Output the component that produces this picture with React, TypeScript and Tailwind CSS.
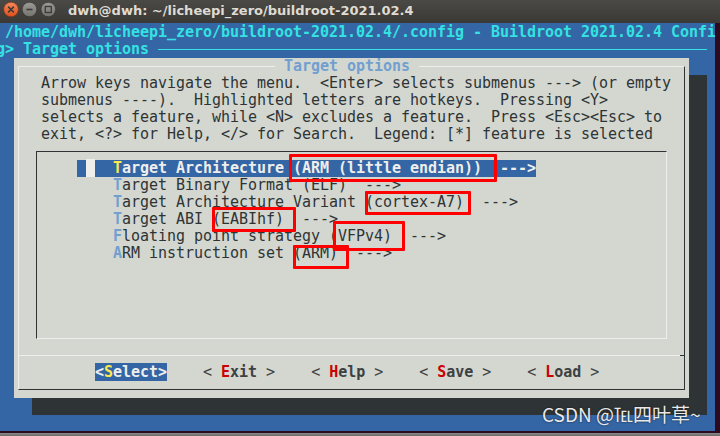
import React from "react";

const MONO = "font-['DejaVu_Sans_Mono',monospace] text-[15px] leading-[17px] tracking-[-0.03px]";

function TitleBar() {
  return (
    <div className="h-[23px] flex items-center bg-gradient-to-b from-[#4a4945] to-[#3a3935] shrink-0">
      <svg width="62" height="23" viewBox="0 0 62 23" className="shrink-0">
        <defs>
          <linearGradient id="cl" x1="0" y1="0" x2="0" y2="1">
            <stop offset="0" stopColor="#f58b5e" />
            <stop offset="1" stopColor="#df4e1c" />
          </linearGradient>
          <linearGradient id="gr" x1="0" y1="0" x2="0" y2="1">
            <stop offset="0" stopColor="#9c9b96" />
            <stop offset="1" stopColor="#73726d" />
          </linearGradient>
        </defs>
        <circle cx="11" cy="9.5" r="7.3" fill="url(#cl)" stroke="#7e3113" strokeWidth="0.6" />
        <path d="M8.6 7.1 L13.4 11.9 M13.4 7.1 L8.6 11.9" stroke="#3c3b37" strokeWidth="1.6" strokeLinecap="round" />
        <circle cx="29.5" cy="9.5" r="7.3" fill="url(#gr)" stroke="#2e2d2a" strokeWidth="0.6" />
        <path d="M26.5 9.5 L32.5 9.5" stroke="#3c3b37" strokeWidth="1.6" />
        <circle cx="48.3" cy="9.5" r="7.3" fill="url(#gr)" stroke="#2e2d2a" strokeWidth="0.6" />
        <rect x="45.3" y="6.5" width="6" height="6" fill="none" stroke="#3c3b37" strokeWidth="1.3" />
      </svg>
      <div className="ml-[6px] font-['DejaVu_Sans',sans-serif] font-bold text-[13px] text-[#dfdbd2] whitespace-pre leading-[20px] pb-[2px]">
        dwh@dwh: ~/licheepi_zero/buildroot-2021.02.4
      </div>
    </div>
  );
}

function Row({ children, className = "" }: { children?: React.ReactNode; className?: string }) {
  return <div className={"h-[17px] whitespace-pre " + className}>{children}</div>;
}

const items = [
  ["T", "arget Binary Format (ELF)  --->"],
  ["T", "arget Architecture Variant (cortex-A7)  --->"],
  ["T", "arget ABI (EABIhf)  --->"],
  ["F", "loating point strategy (VFPv4)  --->"],
  ["A", "RM instruction set (ARM)  --->"],
];

function Btn({ k, rest }: { k: string; rest: string }) {
  return (
    <span className="text-[#3d4143]">
      {"< "}
      <span className="font-bold text-[#cc0000]">{k}</span>
      <span className="font-bold">{rest}</span>
      {" >"}
    </span>
  );
}

function Dialog() {
  return (
    <div className="ml-[18px] w-[675px] h-[340px] bg-[#d3d7cf] relative shadow-[18px_17px_0_0_#2e3436] text-[#2e3436]">
      {/* frame */}
      <div className="absolute left-[4px] top-[8px] w-[667px] h-[324px] border border-t-[#eeeeec] border-l-[#eeeeec] border-r-[#2e3436] border-b-[#2e3436]" />
      {/* separator */}
      <div className="absolute left-[4px] top-[297px] w-[662px] h-[1px] bg-[#eeeeec]" />
      <div className="absolute left-[666px] top-[297px] w-[5px] h-[1px] bg-[#2e3436]" />
      {/* menu box */}
      <div className="absolute left-[22px] top-[93px] w-[631px] h-[188px] border border-t-[#2e3436] border-l-[#2e3436] border-r-[#eeeeec] border-b-[#eeeeec]" />
      {/* title */}
      <div className="absolute left-[261px] top-0 h-[17px] whitespace-pre bg-[#d3d7cf] font-bold text-[#729fcf]">
        {" Target options "}
      </div>
      <div className="relative flex flex-col">
        <Row />
        <Row className="pl-[27px]">Arrow keys navigate the menu.  &lt;Enter&gt; selects submenus ---&gt; (or empty</Row>
        <Row className="pl-[27px]">submenus ----).  Highlighted letters are hotkeys.  Pressing &lt;Y&gt;</Row>
        <Row className="pl-[27px]">selects a feature, while &lt;N&gt; excludes a feature.  Press &lt;Esc&gt;&lt;Esc&gt; to</Row>
        <Row className="pl-[27px]">exit, &lt;?&gt; for Help, &lt;/&gt; for Search.  Legend: [*] feature is selected</Row>
        <Row />
        <Row className="pl-[63px] flex">
          <span className="bg-[#3465a4] font-bold text-[#eeeeec]">
            {" "}
            <span className="bg-[#eeeeec]"> </span>
            {"  "}
            <span className="text-[#fce94f]">T</span>
            {"arget Architecture (ARM (little endian))  --->"}
          </span>
        </Row>
        {items.map(([k, rest], i) => (
          <Row key={i} className="pl-[63px]">
            {"    "}
            <span className="font-bold text-[#729fcf]">{k}</span>
            {rest}
          </Row>
        ))}
        <Row />
        <Row />
        <Row />
        <Row />
        <Row />
        <Row />
        <Row className="pl-[81px]">
          <span className="bg-[#3465a4] font-bold text-[#eeeeec]">
            {"<"}
            <span className="text-[#fce94f]">S</span>
            {"elect>"}
          </span>
          {"    "}
          <Btn k="E" rest="xit" />
          {"    "}
          <Btn k="H" rest="elp" />
          {"    "}
          <Btn k="S" rest="ave" />
          {"    "}
          <Btn k="L" rest="oad" />
        </Row>
        <Row />
      </div>
    </div>
  );
}

function RedBox({ l, t, w, h }: { l: number; t: number; w: number; h: number }) {
  return (
    <div
      className="absolute border-[3px] border-[#ff0000] rounded-[1px] pointer-events-none"
      style={{ left: l, top: t, width: w, height: h }}
    />
  );
}

export default function App() {
  return (
    <div className="relative w-[720px] h-[436px] overflow-hidden bg-[#727272] flex flex-col">
      <TitleBar />
      <div className="flex h-[408px] shrink-0">
        <div className={"relative w-[715px] h-[408px] bg-[#3465a4] overflow-hidden " + MONO}>
          <div className="ml-[-4px] pt-[1px] flex flex-col">
            <Row className="font-bold text-[#34e2e2]">
              {" /home/dwh/licheepi_zero/buildroot-2021.02.4/.config - Buildroot 2021.02.4 Confi"}
            </Row>
            <Row className="flex font-bold text-[#34e2e2]">
              <span>{"g> Target options "}</span>
              <div className="w-[549px] h-[1px] bg-[#34e2e2] self-center" />
            </Row>
            <Dialog />
          </div>
        </div>
        <div className="flex-1 bg-[#2c0b20]" />
      </div>
      <div className="h-[2px] bg-[#2c0b20] shrink-0" />
      <div className="flex-1 bg-gradient-to-b from-[#8a8a8a] to-[#6a6a6a]" />

      <RedBox l={289} t={154} w={208} h={28} />
      <RedBox l={365} t={191} w={106} h={24} />
      <RedBox l={212} t={207} w={84} h={25} />
      <RedBox l={333} t={221} w={72} h={30} />
      <RedBox l={293} t={245} w={56} h={24} />

      <div className="absolute left-[542px] top-[402px] font-['Noto_Sans_CJK_SC','Noto_Sans',sans-serif] text-[19px] leading-[24px] text-[#e9e9e9] whitespace-pre [text-shadow:0_0_2px_rgba(0,0,0,0.7)]">
        CSDN @℡四叶草~
      </div>
    </div>
  );
}
